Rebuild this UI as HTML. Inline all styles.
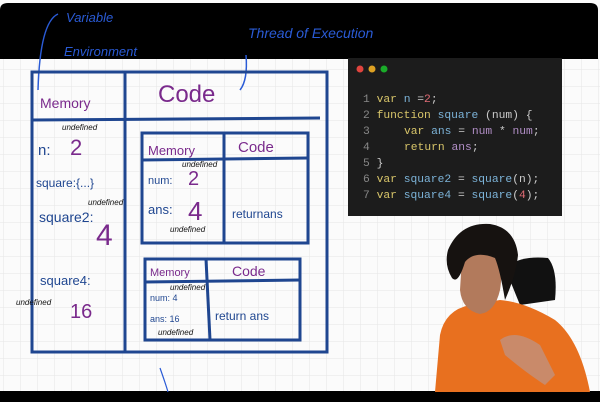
<!DOCTYPE html>
<html><head><meta charset="utf-8"><style>
html,body{margin:0;padding:0;width:600px;height:402px;overflow:hidden;background:#fff}
svg{display:block}
.hw{font-family:"Liberation Sans",sans-serif;font-style:italic}
.code{font-family:"Liberation Mono",monospace;font-size:11.3px}
</style></head><body>
<svg width="600" height="402" viewBox="0 0 600 402" xmlns="http://www.w3.org/2000/svg">
<defs>
<pattern id="g" width="17" height="17" patternUnits="userSpaceOnUse" x="4" y="2">
<path d="M17 0V17H0" fill="none" stroke="#e6e6e6" stroke-width="1"/>
</pattern>
</defs>
<rect width="600" height="402" fill="#fbfbfb"/>
<rect y="58" width="600" height="340" fill="url(#g)"/>
<path d="M0 10Q0 3 8 3H590Q598 3 598 10V59H0Z" fill="#000"/>
<rect y="391" width="600" height="11" fill="#000"/>
<g fill="#2a5bd6" class="hw">
<text x="66" y="22" font-size="13">Variable</text>
<text x="64" y="56" font-size="13">Environment</text>
<text x="248" y="38" font-size="14">Thread of Execution</text>
</g>
<path d="M58 14Q40 22 38 90" stroke="#2a5bd6" stroke-width="1.5" fill="none"/>
<path d="M246 55Q248 80 240 90" stroke="#2a5bd6" stroke-width="1.5" fill="none"/>
<g stroke="#1f4690" stroke-width="3" fill="none">
<rect x="32" y="72" width="295" height="280"/>
<line x1="125" y1="72" x2="125" y2="352"/>
<line x1="32" y1="120" x2="320" y2="118"/>
<rect x="142" y="133" width="166" height="110"/>
<line x1="224" y1="133" x2="224" y2="243"/>
<line x1="142" y1="160" x2="308" y2="158"/>
<rect x="145" y="259" width="155" height="81"/>
<line x1="206" y1="259" x2="210" y2="340"/>
<line x1="145" y1="282" x2="300" y2="280"/>
</g>
<g fill="#7a2a8c" font-family="Liberation Sans,sans-serif">
<text x="40" y="108" font-size="14">Memory</text>
<text x="158" y="102" font-size="24">Code</text>
<text x="148" y="155" font-size="13">Memory</text>
<text x="238" y="152" font-size="15">Code</text>
<text x="70" y="155" font-size="22">2</text>
<text x="188" y="185" font-size="20">2</text>
<text x="188" y="220" font-size="26">4</text>
<text x="96" y="245" font-size="30">4</text>
<text x="150" y="276" font-size="11">Memory</text>
<text x="232" y="276" font-size="14">Code</text>
<text x="70" y="318" font-size="20">16</text>
</g>
<g fill="#1f4690" font-family="Liberation Sans,sans-serif">
<text x="38" y="155" font-size="15">n:</text>
<text x="36" y="187" font-size="12">square:{...}</text>
<text x="39" y="222" font-size="14">square2:</text>
<text x="40" y="285" font-size="13">square4:</text>
<text x="148" y="184" font-size="11">num:</text>
<text x="148" y="214" font-size="13">ans:</text>
<text x="232" y="218" font-size="12">returnans</text>
<text x="150" y="301" font-size="9">num: 4</text>
<text x="150" y="322" font-size="9">ans: 16</text>
<text x="215" y="320" font-size="12">return ans</text>
</g>
<g fill="#111" font-family="Liberation Sans,sans-serif" font-size="8" font-style="italic">
<text x="62" y="130">undefined</text>
<text x="182" y="167">undefined</text>
<text x="88" y="205">undefined</text>
<text x="170" y="232">undefined</text>
<text x="16" y="305">undefined</text>
<text x="170" y="290">undefined</text>
<text x="158" y="335">undefined</text>
</g>
<path d="M160 368Q166 385 168 392" stroke="#2a5bd6" stroke-width="1.2" fill="none"/>
<rect x="348" y="58" width="214" height="158" fill="#1c1c1c"/>
<circle cx="360" cy="69" r="3.5" fill="#e0443e"/>
<circle cx="372" cy="69" r="3.5" fill="#dea123"/>
<circle cx="384" cy="69" r="3.5" fill="#1aab29"/>
<g class="code">
<text x="363" y="102" fill="#888">1 <tspan fill="#d9c66a">var</tspan> <tspan fill="#7cb3d8">n</tspan> <tspan fill="#ccc">=</tspan><tspan fill="#e06c75">2</tspan><tspan fill="#ccc">;</tspan></text>
<text x="363" y="118" fill="#888">2 <tspan fill="#d9c66a">function</tspan> <tspan fill="#7cb3d8">square</tspan> <tspan fill="#ccc">(num) {</tspan></text>
<text x="363" y="134" fill="#888">3<tspan x="404" fill="#d9c66a">var</tspan> <tspan fill="#7cb3d8">ans</tspan> <tspan fill="#ccc">=</tspan> <tspan fill="#b28fc7">num</tspan> <tspan fill="#ccc">*</tspan> <tspan fill="#b28fc7">num</tspan><tspan fill="#ccc">;</tspan></text>
<text x="363" y="150" fill="#888">4<tspan x="404" fill="#d9c66a">return</tspan> <tspan fill="#b28fc7">ans</tspan><tspan fill="#ccc">;</tspan></text>
<text x="363" y="166" fill="#888">5 <tspan fill="#ccc">}</tspan></text>
<text x="363" y="182" fill="#888">6 <tspan fill="#d9c66a">var</tspan> <tspan fill="#7cb3d8">square2</tspan> <tspan fill="#ccc">=</tspan> <tspan fill="#7cb3d8">square</tspan><tspan fill="#ccc">(n);</tspan></text>
<text x="363" y="198" fill="#888">7 <tspan fill="#d9c66a">var</tspan> <tspan fill="#7cb3d8">square4</tspan> <tspan fill="#ccc">=</tspan> <tspan fill="#7cb3d8">square</tspan><tspan fill="#ccc">(</tspan><tspan fill="#e06c75">4</tspan><tspan fill="#ccc">);</tspan></text>
</g>
<path d="M505 268Q520 255 548 258Q558 270 555 300L520 305Z" fill="#111"/>
<path d="M435 392L440 335Q445 310 470 305L500 300Q525 302 555 320Q580 340 590 392Z" fill="#e8701f"/>
<path d="M500 340Q515 328 540 345L555 375L545 385Q525 372 505 355Z" fill="#c98a6a"/>
<path d="M462 258Q470 245 490 248Q505 258 500 290Q495 312 480 314Q462 310 460 290Z" fill="#b27a5c"/>
<path d="M448 250Q460 222 490 224Q515 228 518 255Q516 275 505 300Q500 270 495 258Q475 250 465 262Q458 285 452 278Q444 265 448 250Z" fill="#161210"/>
</svg>
</body></html>
